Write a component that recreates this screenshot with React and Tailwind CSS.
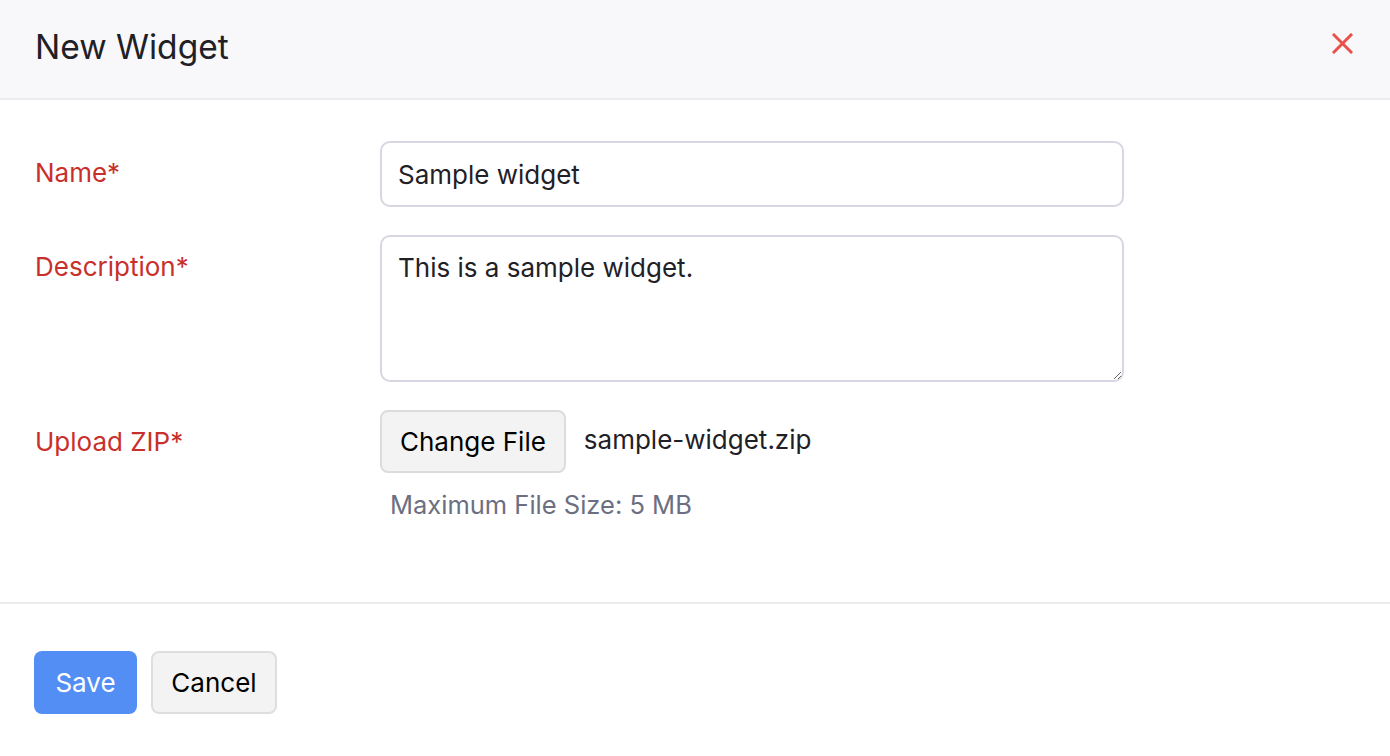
import React from 'react'

const font = { fontFamily: 'Inter, "Noto Sans", sans-serif' }

function CloseIcon() {
  return (
    <svg width="21" height="21" viewBox="0 0 21 21" fill="none" stroke="#e9524a" strokeWidth="3" strokeLinecap="square">
      <path d="M2 2L19 19M19 2L2 19" />
    </svg>
  )
}

function Row({ label, children }) {
  return (
    <div className="flex">
      <div className="w-[345px] shrink-0 pt-[17px] text-[26px] leading-[30px] text-[#c8302b]">{label}</div>
      <div className="flex-1">{children}</div>
    </div>
  )
}

export default function App() {
  return (
    <div className="w-[1390px] h-[756px] bg-white text-[#1f2126] overflow-hidden" style={font}>
      <div className="h-[100px] flex items-center justify-between pl-[35px] pr-[37px] bg-[#f8f8fa] border-b-2 border-[#ececee]">
        <h1 className="text-[33.5px] leading-[40px] -mt-[4px] text-[#1f2126]">New Widget</h1>
        <button className="-mt-[12px]" aria-label="Close">
          <CloseIcon />
        </button>
      </div>

      <div className="pl-[35px] pt-[41px] pb-[79px] flex flex-col gap-[28px] border-b-2 border-[#ececee]">
        <Row label="Name*">
          <input
            defaultValue="Sample widget"
            className="block w-[744px] h-[66px] px-[16px] text-[26px] border-2 border-[#d7d6e3] rounded-[10px] outline-none text-[#1f2126]"
          />
        </Row>
        <Row label="Description*">
          <textarea
            defaultValue="This is a sample widget."
            className="block w-[744px] h-[147px] px-[16px] pt-[16px] text-[26px] leading-[30px] border-2 border-[#d7d6e3] rounded-[10px] outline-none text-[#1f2126]"
          />
        </Row>
        <Row label="Upload ZIP*">
          <div className="flex items-center gap-[18px]">
            <button className="h-[63px] px-[18px] bg-[#f3f3f3] border-2 border-[#dcdcdc] rounded-[8px] text-[26px] text-black">
              Change File
            </button>
            <span className="text-[26px] text-[#1f2126] -mt-[4px]">sample-widget.zip</span>
          </div>
          <div className="pl-[10px] mt-[14px] text-[25.5px] leading-[36px] text-[#6c6f82]">Maximum File Size: 5 MB</div>
        </Row>
      </div>

      <div className="pl-[34px] pt-[47px] flex gap-[14px]">
        <button className="h-[63px] w-[103px] bg-[#528ef4] text-white text-[26px] rounded-[8px]">Save</button>
        <button className="h-[63px] w-[126px] bg-[#f3f3f3] border-2 border-[#dedede] text-black text-[26px] rounded-[8px]">Cancel</button>
      </div>
    </div>
  )
}
